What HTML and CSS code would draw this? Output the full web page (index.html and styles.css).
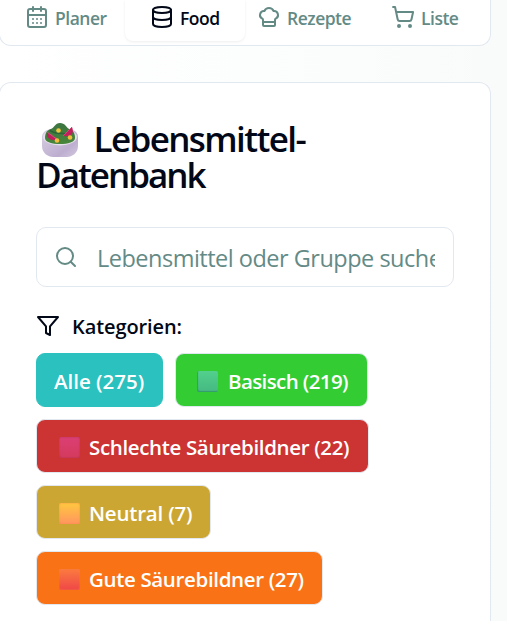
FILE: index.html
```html
<!DOCTYPE html>
<html lang="de">
<head>
    <meta charset="UTF-8">
    <meta name="viewport" content="width=device-width, initial-scale=1.0">
    <title>Lebensmittel-Datenbank</title>
    <link rel="stylesheet" href="styles.css">
</head>
<body>
    <nav class="tabs">
        <button class="tab tab-planer">
            <svg class="icon" viewBox="0 0 24 24"><path d="M8 2v4M16 2v4M3 10h18M8 14h.01M12 14h.01M16 14h.01M8 18h.01M12 18h.01M16 18h.01"/><rect x="3" y="4" width="18" height="18" rx="2"/></svg>
            <span>Planer</span>
        </button>
        <button class="tab tab-food active">
            <svg class="icon" viewBox="0 0 24 24"><ellipse cx="12" cy="5" rx="9" ry="3"/><path d="M3 5v14a9 3 0 0 0 18 0V5"/><path d="M3 12a9 3 0 0 0 18 0"/></svg>
            <span>Food</span>
        </button>
        <button class="tab tab-rezepte">
            <svg class="icon" viewBox="0 0 24 24"><path d="M17 21a1 1 0 0 0 1-1v-5.350c0-.457.316-.844.727-1.041a4 4 0 0 0-2.134-7.589 5 5 0 0 0-9.186 0 4 4 0 0 0-2.134 7.588c.411.198.727.585.727 1.041V20a1 1 0 0 0 1 1Z"/><path d="M6 17h12"/></svg>
            <span>Rezepte</span>
        </button>
        <button class="tab tab-liste">
            <svg class="icon" viewBox="0 0 24 24"><circle cx="8" cy="21" r="1"/><circle cx="19" cy="21" r="1"/><path d="M2.050 2.050h2l2.660 12.420a2 2 0 0 0 2 1.580h9.780a2 2 0 0 0 1.950-1.570l1.650-7.430H5.120"/></svg>
            <span>Liste</span>
        </button>
    </nav>

    <main class="card">
        <h1 class="title">
            <svg class="salad" viewBox="0 0 36 36">
                <defs>
                    <linearGradient id="bowl" x1="0" y1="0" x2="1" y2="1">
                        <stop offset="0" stop-color="#d9d0e2"/>
                        <stop offset=".7" stop-color="#bdaed0"/>
                        <stop offset="1" stop-color="#d3c8df"/>
                    </linearGradient>
                    <linearGradient id="leaf" x1="0" y1="0" x2="0" y2="1">
                        <stop offset="0" stop-color="#3b7441"/>
                        <stop offset="1" stop-color="#47863b"/>
                    </linearGradient>
                </defs>
                <path d="M0 15C0 8 8 6 18 6s18 2 18 9v9c0 7-6 11-11 11H11C6 35 0 31 0 24Z" fill="url(#bowl)"/>
                <ellipse cx="18" cy="15" rx="17" ry="8.500" fill="#e4dfea"/>
                <path d="M3 16c0-5 2-8 6-9 3-1 4-6 9-6s6 4 9 6c4 1 6 4 6 9 0 4-7 6-15 6S3 20 3 16Z" fill="url(#leaf)"/>
                <path d="M8 8c4 5 10 2 16 4" stroke="#2d6337" stroke-width="1.500" fill="none"/>
                <path d="M5 10c-1 6 3 9 11 8Z" fill="#c01f5b"/>
                <path d="M5 10l11 8" stroke="#d94a7a" stroke-width="1"/>
                <path d="M30 5c2 5 1 10-9 9Z" fill="#c01f5b"/>
                <path d="M30 5l-9 9" stroke="#d94a7a" stroke-width="1"/>
                <circle cx="16.500" cy="8.500" r="2.300" fill="#efc73e"/>
                <circle cx="28" cy="15.500" r="2.300" fill="#f3bc3b"/>
                <circle cx="15" cy="18.500" r="2.300" fill="#f3bc3b"/>
            </svg>
            Lebensmittel-<br><span class="title-end">Datenbank</span>
        </h1>

        <label class="search">
            <svg class="icon" viewBox="0 0 24 24"><circle cx="11" cy="11" r="8"/><path d="m21 21-4.300-4.300"/></svg>
            <input type="text" placeholder="Lebensmittel oder Gruppe suchen...">
        </label>

        <div class="filter-label">
            <svg class="icon" viewBox="0 0 24 24"><path d="M22 3H2l8 9.460V19l4 2v-8.540Z"/></svg>
            <span>Kategorien:</span>
        </div>

        <div class="categories">
            <button class="category alle"><span>Alle (275)</span></button>
            <button class="category basisch"><i class="square"></i><span>Basisch (219)</span></button>
            <button class="category schlecht"><i class="square"></i><span>Schlechte Säurebildner (22)</span></button>
            <button class="category neutral"><i class="square"></i><span>Neutral (7)</span></button>
            <button class="category gut"><i class="square"></i><span>Gute Säurebildner (27)</span></button>
        </div>
    </main>
</body>
</html>
```
FILE: styles.css
```css
* {
    box-sizing: border-box;
}

body {
    margin: 0;
    height: 621px;
    overflow: hidden;
    font-family: "Segoe UI", "Open Sans", "Noto Sans", sans-serif;
    color: #020817;
    background: linear-gradient(90deg, #ffffff, #f9fbfb);
}

button {
    font-family: inherit;
    border: none;
    padding: 0;
    background: none;
    cursor: pointer;
    white-space: nowrap;
}

.icon {
    width: 24px;
    height: 24px;
    flex: none;
    fill: none;
    stroke: currentColor;
    stroke-width: 2;
    stroke-linecap: round;
    stroke-linejoin: round;
}

.tabs {
    display: flex;
    width: 492px;
    height: 46px;
    margin-left: -1px;
    padding-left: 5px;
    background: #fff;
    border: 1px solid #e2e8f0;
    border-top: none;
    border-radius: 0 0 12px 12px;
}

.tab {
    display: flex;
    align-items: center;
    width: 120px;
    height: 41px;
    padding: 0 0 7px 20px;
    gap: 6px;
    font-size: 17.5px;
    font-weight: 600;
    color: #648a86;
    border-radius: 0 0 8px 8px;
}

.tab-food {
    padding-left: 25px;
}

.tab-rezepte {
    padding-left: 12px;
}

.tab-liste {
    padding-left: 26px;
}

.tab.active {
    color: #020817;
    box-shadow: 0 1px 3px rgba(0, 0, 0, 0.07);
}

.tab span {
    padding-top: 1px;
    letter-spacing: -0.5px;
}

.card {
    width: 492px;
    height: 539px;
    margin: 36px 0 0 -1px;
    padding: 38px 36px 0;
    background: #fff;
    border: 1px solid #e2e8f0;
    border-bottom: none;
    border-radius: 12px 12px 0 0;
}

.title {
    height: 72px;
    margin: 0;
    font-size: 35px;
    line-height: 36px;
    font-weight: 600;
    letter-spacing: -1.6px;
    white-space: nowrap;
}

.title-end {
    letter-spacing: -2px;
}

.salad {
    width: 36px;
    height: 36px;
    margin: 0 8px -2px 6px;
    vertical-align: -4px;
}

.search {
    display: flex;
    align-items: center;
    width: 418px;
    height: 60px;
    margin-top: 34px;
    padding: 0 18px 0 17px;
    gap: 19px;
    color: #648a86;
    border: 1px solid #e2e8f0;
    border-radius: 10px;
}

.search input {
    flex: 1;
    min-width: 0;
    height: 40px;
    padding: 2px 0 0;
    border: none;
    outline: none;
    font-family: inherit;
    font-size: 23.5px;
    letter-spacing: -0.5px;
    background: none;
}

.search input::placeholder {
    color: #648a86;
    opacity: 1;
}

.filter-label {
    display: flex;
    align-items: center;
    height: 30px;
    margin-top: 24px;
    gap: 12px;
    font-size: 20px;
    font-weight: 600;
    letter-spacing: -0.1px;
}

.categories {
    display: flex;
    flex-wrap: wrap;
    gap: 12px;
    margin-top: 12px;
}

.category {
    display: flex;
    align-items: center;
    height: 54px;
    padding: 2px 0 0 17px;
    font-size: 20.5px;
    font-weight: 600;
    letter-spacing: -0.35px;
    color: #fff;
    border: 1px solid #e2e8f0;
    border-radius: 9px;
}

.square {
    width: 21px;
    height: 21px;
    margin: 0 9px 0 5px;
    border-radius: 2px;
    box-shadow: inset 0 0 2px rgba(0, 0, 0, 0.2);
}

.alle {
    width: 127px;
    letter-spacing: 0;
    background: #2bc1be;
    border-color: #2bc1be;
}

.basisch {
    width: 193px;
    letter-spacing: -0.6px;
    background: #33cc33;
}

.basisch .square {
    margin-left: 4px;
    margin-right: 10px;
    background: linear-gradient(#52d08c, #45b882);
    box-shadow: inset 1px -1px 1px #349b6c;
}

.schlecht {
    width: 333px;
    background: #cc3333;
}

.schlecht .square {
    background: linear-gradient(#db3f75, #d43a5c);
}

.neutral {
    width: 175px;
    letter-spacing: -0.2px;
    background: #cca633;
}

.neutral .square {
    background: linear-gradient(#ffc83f, #ff9560);
    box-shadow: inset 0 0 2px #ff8648;
}

.gut {
    width: 287px;
    background: #f97316;
}

.gut .square {
    background: linear-gradient(#fb7b3f, #ef4747);
    box-shadow: inset 0 0 2px #f77b3c;
}
```
